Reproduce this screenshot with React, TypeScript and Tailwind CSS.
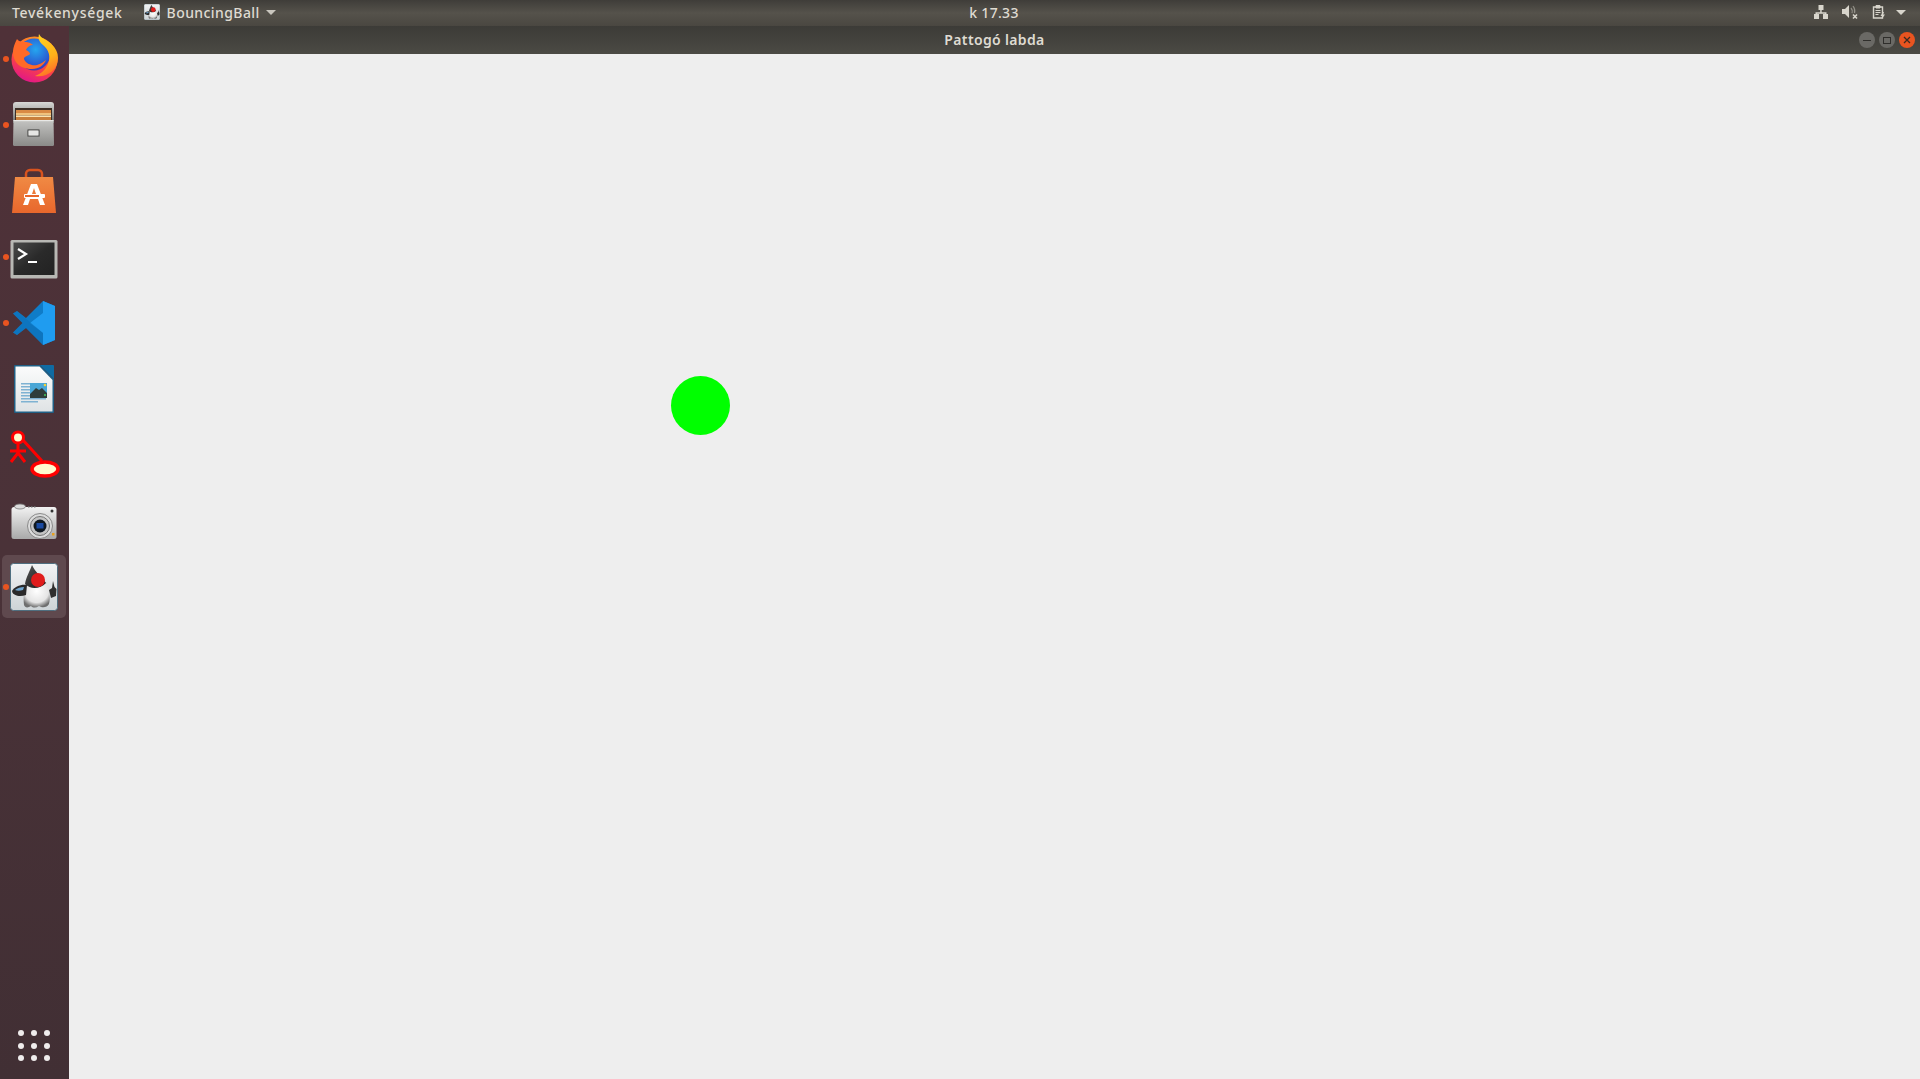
import React from 'react';

const FirefoxIcon = () => (
  <svg viewBox="0 0 48 48" className="w-12 h-12 overflow-visible">
    <defs>
      <linearGradient id="ffBody" x1="0.7" y1="0" x2="0.3" y2="1">
        <stop offset="0" stopColor="#ff9a1f" />
        <stop offset="0.55" stopColor="#ff4a3a" />
        <stop offset="1" stopColor="#e0148c" />
      </linearGradient>
      <linearGradient id="ffTail" x1="0.3" y1="0" x2="0.6" y2="1">
        <stop offset="0" stopColor="#ffd21f" />
        <stop offset="0.6" stopColor="#ffb01a" />
        <stop offset="1" stopColor="#ff6a2a" />
      </linearGradient>
      <radialGradient id="ffGlobe" cx="0.55" cy="0.35" r="0.7">
        <stop offset="0" stopColor="#25a6ef" />
        <stop offset="0.7" stopColor="#2a56d0" />
        <stop offset="1" stopColor="#4a2aa8" />
      </radialGradient>
    </defs>
    <circle cx="24.500" cy="24.500" r="23" fill="url(#ffBody)" />
    <circle cx="24" cy="19.500" r="16" fill="url(#ffGlobe)" />
    <path d="M7 4c2 3 6 3 9 3 2 0 5 1 7 3-3 0-6 2-7 5 2 1 4 2 4 4-2 2-6 2-6 5 2 5 8 7 13 6 4-1 6-3 9-5-2 5-7 9-14 9C8 34 3 25 3 17c0-5 2-9 4-13z" fill="#ff6a28" />
    <path d="M29-1c-1 4 0 8 4 11 6 5 8 12 5 19-2 5-7 10-13 12 12 2 23-6 23-18C48 12 38 6 34 4c-2-1-4-3-5-5z" fill="url(#ffTail)" />
  </svg>
);

const FilesIcon = () => (
  <svg viewBox="0 0 48 48" className="w-12 h-12">
    <defs>
      <linearGradient id="cabTop" x1="0" y1="0" x2="0" y2="1">
        <stop offset="0" stopColor="#d8d8d6" />
        <stop offset="1" stopColor="#6d6d6b" />
      </linearGradient>
      <linearGradient id="cabFront" x1="0" y1="0" x2="0" y2="1">
        <stop offset="0" stopColor="#c4c4c2" />
        <stop offset="1" stopColor="#8a8a88" />
      </linearGradient>
    </defs>
    <path d="M3 4a3 3 0 0 1 3-3h35a3 3 0 0 1 3 3v18H3z" fill="url(#cabTop)" />
    <rect x="5" y="7" width="37" height="13" fill="#3d2f26" />
    <rect x="6" y="9" width="35" height="3" fill="#d98a45" />
    <rect x="6" y="12" width="35" height="2.500" fill="#f0c27e" />
    <rect x="6" y="14.500" width="35" height="1.500" fill="#fbe2b0" />
    <rect x="6" y="16" width="35" height="3" fill="#c97f3c" />
    <path d="M3.500 19h40l.5 24.500a1.500 1.500 0 0 1-1.500 1.500h-38A1.500 1.500 0 0 1 3 43.500z" fill="url(#cabFront)" />
    <rect x="3.500" y="19" width="40" height="1.200" fill="#e8e8e6" />
    <rect x="17" y="28" width="13" height="8" rx="1.500" fill="#6f6f6d" />
    <rect x="18.500" y="29.500" width="10" height="5" rx="1" fill="#e6e6e4" />
  </svg>
);

const StoreIcon = () => (
  <svg viewBox="0 0 48 48" className="w-12 h-12">
    <defs>
      <linearGradient id="bag" x1="0" y1="0" x2="0" y2="1">
        <stop offset="0" stopColor="#f08a44" />
        <stop offset="1" stopColor="#e8672c" />
      </linearGradient>
    </defs>
    <path d="M16 12V7a4 4 0 0 1 4-4h8a4 4 0 0 1 4 4v5" fill="none" stroke="#d9531e" strokeWidth="2.500" />
    <path d="M5 10h38l3 36H2z" fill="url(#bag)" />
    <path d="M21 17h6l8 21h-5l-2-6h-8l-2 6h-5z M22 27h4l-2-6z" fill="#fff" fillRule="evenodd" />
    <rect x="14" y="27" width="21" height="4" rx="1" fill="#fff" />
    <rect x="15" y="28" width="14" height="2" fill="#e8672c" />
  </svg>
);

const TerminalIcon = () => (
  <svg viewBox="0 0 48 48" className="w-12 h-12">
    <defs>
      <linearGradient id="term" x1="0" y1="0" x2="1" y2="1">
        <stop offset="0" stopColor="#4a4a4a" />
        <stop offset="0.5" stopColor="#2a2a2a" />
        <stop offset="1" stopColor="#222" />
      </linearGradient>
    </defs>
    <g transform="translate(0 2)">
      <rect x="0.500" y="5" width="47" height="38.500" rx="1.500" fill="#b8b8b4" />
      <rect x="3.500" y="7.500" width="41" height="32.500" fill="url(#term)" />
      <path d="M8 14l8 5-8 5" fill="none" stroke="#fff" strokeWidth="2.200" />
      <rect x="18" y="26" width="9" height="2" fill="#fff" />
    </g>
  </svg>
);

const VSCodeIcon = () => (
  <svg viewBox="0 0 48 48" className="w-12 h-12">
    <path d="M33 2L16 19 7 12l-4 2.500 9.500 9.500L3 33.500 7 36l9-7 17 17 12-5V7z" fill="#0f7cc8" />
    <path d="M33 2l12 5v34l-12 5V34L20 24l13-10z" fill="#1f9cf0" />
    <path d="M3 14.500L7 12l26 22v12L16 29 7 36l-4-2.500L12.500 24z" fill="#0a6cb4" opacity="0.45" />
  </svg>
);

const WriterIcon = () => (
  <svg viewBox="0 0 48 48" className="w-12 h-12">
    <defs>
      <linearGradient id="sheet" x1="0" y1="0" x2="0" y2="1">
        <stop offset="0" stopColor="#fbfcfc" />
        <stop offset="1" stopColor="#dfe3e5" />
      </linearGradient>
    </defs>
    <path d="M5 0h25l14 14v33a1 1 0 0 1-1 1H5a1 1 0 0 1-1-1V1a1 1 0 0 1 1-1z" fill="#1f5f85" />
    <path d="M5.500 1.500h24L42.500 15v31.500h-37z" fill="url(#sheet)" />
    <path d="M30 0l14 14V1a1 1 0 0 0-1-1z" fill="#0f6ba3" />
    <g fill="#7fb2d2">
      <rect x="11" y="18" width="17" height="1.500" />
      <rect x="11" y="21" width="17" height="1.500" />
      <rect x="11" y="24" width="17" height="1.500" />
      <rect x="11" y="27" width="17" height="1.500" />
      <rect x="11" y="30" width="17" height="1.500" />
      <rect x="11" y="33" width="25" height="1.500" />
      <rect x="11" y="36" width="17" height="1.500" />
    </g>
    <rect x="20" y="18" width="17" height="15" fill="#4aa7d6" />
    <path d="M20 29l6-6 3 2 3-2 5 5v5H20z" fill="#2f3d3a" />
    <circle cx="35" cy="20" r="1.300" fill="#f2d13c" />
    <rect x="34" y="29" width="2" height="2" fill="#3aa655" />
  </svg>
);

const UmbrelloIcon = () => (
  <svg viewBox="0 0 48 48" className="w-12 h-12 overflow-visible">
    <g fill="none" stroke="#ff0000" strokeWidth="3">
      <path d="M8 12v10M0 20h16M8 22L1 31M8 22l7 9" />
      <path d="M12 8l20 22" />
      <circle cx="8" cy="6.500" r="5.500" fill="#fffacd" />
      <ellipse cx="35" cy="38" rx="13" ry="7" fill="#fffacd" strokeWidth="3.500" />
    </g>
  </svg>
);

const CameraIcon = () => (
  <svg viewBox="0 0 48 48" className="w-12 h-12">
    <defs>
      <linearGradient id="cam" x1="0" y1="0" x2="0" y2="1">
        <stop offset="0" stopColor="#f2f2f2" />
        <stop offset="1" stopColor="#a9a9a9" />
      </linearGradient>
    </defs>
    <rect x="1.500" y="10" width="45" height="32" rx="2.500" fill="url(#cam)" />
    <ellipse cx="10" cy="9.500" rx="5.500" ry="2.500" fill="#dcdcdc" stroke="#777" strokeWidth="0.800" />
    <g fill="#666">
      <rect x="18" y="9" width="1.500" height="1.500" />
      <rect x="21" y="9" width="1.500" height="1.500" />
      <rect x="24" y="9" width="1.500" height="1.500" />
    </g>
    <circle cx="30" cy="29" r="12.500" fill="#dcdcdc" stroke="#8a8a8a" />
    <circle cx="30" cy="29" r="9.500" fill="#c4c4c4" stroke="#777" />
    <circle cx="30" cy="29" r="6.500" fill="#101820" />
    <rect x="26.500" y="26" width="7" height="5.500" fill="#1b4aa0" />
    <circle cx="42" cy="14" r="1.500" fill="#333" />
    <rect x="42" y="36" width="2.500" height="2.500" fill="#e8a020" />
  </svg>
);

const JavaIcon = () => (
  <svg viewBox="0 0 48 48" className="w-12 h-12">
    <defs>
      <linearGradient id="jbg" x1="0" y1="0" x2="0" y2="1">
        <stop offset="0" stopColor="#f2f3f4" />
        <stop offset="1" stopColor="#cdd3d6" />
      </linearGradient>
      <radialGradient id="jbody" cx="0.5" cy="0.35" r="0.65">
        <stop offset="0" stopColor="#fff" />
        <stop offset="0.7" stopColor="#e4e4e4" />
        <stop offset="1" stopColor="#6e6e6e" />
      </radialGradient>
      <linearGradient id="jhat" x1="0" y1="0" x2="1" y2="1">
        <stop offset="0" stopColor="#555" />
        <stop offset="1" stopColor="#161616" />
      </linearGradient>
    </defs>
    <rect x="0.500" y="0.500" width="47" height="47" rx="3" fill="url(#jbg)" stroke="#4f6f80" />
    <path d="M14 42c-1-8 0-17 3-22 6 5 14 4 19-1 3 7 5 15 3 22-2 4-7 4-10 2-3 2-6 2-8 0-3 2-6 2-7-1z" fill="url(#jbody)" />
    <path d="M22 2c3 7 10 12 14 18-6 6-15 7-21 1 1-7 5-13 7-19z" fill="url(#jhat)" />
    <circle cx="28" cy="17" r="7" fill="#e01c1c" />
    <path d="M2 28c2-4 9-7 15-6l-1 10c-6 2-13 1-14-4z" fill="#2a2a2a" />
    <path d="M5 27c2-2 6-3 9-3l-1 3c-3 1-6 1-8 0z" fill="#6ea5cf" />
    <path d="M43 18l1.500 6 2 2-.5 7-5 2-2-8 3-2z" fill="#2f2f2f" />
  </svg>
);

const dockItems = [
  { icon: <FirefoxIcon />, running: true, active: false },
  { icon: <FilesIcon />, running: true, active: false },
  { icon: <StoreIcon />, running: false, active: false },
  { icon: <TerminalIcon />, running: true, active: false },
  { icon: <VSCodeIcon />, running: true, active: false },
  { icon: <WriterIcon />, running: false, active: false },
  { icon: <UmbrelloIcon />, running: false, active: false },
  { icon: <CameraIcon />, running: false, active: false },
  { icon: <JavaIcon />, running: true, active: true },
];

const font = 'font-["Noto_Sans",sans-serif]';

export default function App() {
  return (
    <div className={`h-[1079px] w-[1920px] flex flex-col overflow-hidden ${font}`}>
      {/* Top panel */}
      <div className="h-[26px] flex items-center shrink-0 pb-[2px] bg-gradient-to-b from-[#3f3d39] via-[#55524b] to-[#4a4741] text-[14px] font-medium text-[#dfdbd2]">
        <div className="w-[934px] flex items-center pl-3">
          <span className="tracking-[0.7px]">Tevékenységek</span>
          <span className="ml-[21px] w-4 h-4 rounded-[2px] bg-[#e8eaeb] overflow-hidden shrink-0 [&>svg]:w-4 [&>svg]:h-4">
            <JavaIcon />
          </span>
          <span className="ml-[7px] tracking-[0.42px]">BouncingBall</span>
          <span className="ml-[6px] border-x-[5px] border-x-transparent border-t-[5px] border-t-[#c9c6be]" />
        </div>
        <div className="w-[120px] text-center tracking-[0.3px]">k 17.33</div>
        <div className="flex-1 flex items-center text-[#d8d5cc]">
          <div className="ml-auto flex items-center pr-[14px]">
            <svg viewBox="0 0 16 16" className="w-4 h-4" fill="currentColor">
              <path d="M5.500 1h5v5H8.700v2.200H13.500V10H15v5h-5v-5h1.800V9.800H4.200V10H6v5H1v-5h1.500V8.200h4.700V6H5.500z" />
            </svg>
            <svg viewBox="0 0 18 16" className="w-[18px] h-4 ml-[12px]" fill="currentColor">
              <path d="M1 5h3l4-4v13l-4-4H1z" />
              <path d="M10 4a5 5 0 0 1 1 5M12 2a8 8 0 0 1 1.500 7" fill="none" stroke="currentColor" strokeOpacity="0.5" strokeWidth="1.200" />
              <path d="M12 10.500l4 4m0-4l-4 4" stroke="currentColor" strokeWidth="1.600" />
            </svg>
            <svg viewBox="0 0 16 16" className="w-4 h-4 ml-[12px]" fill="none" stroke="currentColor">
              <path d="M2.500 3h9v11h-9z" strokeWidth="1.400" />
              <path d="M5 1.500h4v2.500H5z" fill="currentColor" />
              <path d="M4.500 6.500h5M4.500 8.500h5M4.500 10.500h3" strokeWidth="1" />
              <path d="M12 8l-2.500 4h2L10.500 15.500l3.500-5h-2l1-2.500z" fill="currentColor" stroke="none" />
            </svg>
            <span className="ml-[9px] border-x-[5px] border-x-transparent border-t-[5px] border-t-[#d8d5cc]" />
          </div>
        </div>
      </div>

      <div className="flex-1 flex min-h-0">
        {/* Dock */}
        <div className="w-[69px] shrink-0 flex flex-col bg-gradient-to-b from-[#4f3138] via-[#4a3238] to-[#412f34]">
          {dockItems.map((item, i) => (
            <div key={i} className="relative h-[66px] flex items-center justify-center">
              {item.active && <div className="absolute left-[2px] top-[1px] w-[64px] h-[63px] rounded-[5px] bg-[#5f494e]" />}
              <div className="relative w-12 h-12 ml-[-2px]">{item.icon}</div>
              {item.running && <span className="absolute left-[3px] top-[30px] w-[6px] h-[6px] rounded-full bg-[#e95420]" />}
            </div>
          ))}
          <div className="mt-auto mb-[18px] ml-[18px] grid grid-cols-3 w-[32px] gap-x-[6.500px] gap-y-[6.500px]">
            {Array.from({ length: 9 }).map((_, i) => (
              <span key={i} className="w-[6px] h-[6px] rounded-full bg-[#efecec]" />
            ))}
          </div>
        </div>

        {/* Window */}
        <div className="flex-1 flex flex-col min-w-0">
          <div className="relative h-[28px] shrink-0 flex items-center justify-center pb-[2px] bg-gradient-to-b from-[#3c3b37] to-[#4b4a44] text-[14px] font-semibold text-[#dfdbd2]">
            <span className="tracking-[0.35px]">Pattogó labda</span>
            <div className="absolute right-[5px] top-[6px] flex gap-1">
              <span className="w-4 h-4 rounded-full bg-[#6a6965] flex items-center justify-center">
                <span className="w-2 h-px bg-[#2f2e2b]" />
              </span>
              <span className="w-4 h-4 rounded-full bg-[#6a6965] flex items-center justify-center">
                <span className="w-2 h-[7px] border border-[#2f2e2b]" />
              </span>
              <span className="w-4 h-4 rounded-full bg-[#e95420] flex items-center justify-center text-[#3c2a20]">
                <svg viewBox="0 0 8 8" className="w-2 h-2" stroke="currentColor" strokeWidth="1.300">
                  <path d="M1 1l6 6M7 1L1 7" />
                </svg>
              </span>
            </div>
          </div>
          <div className="relative flex-1 bg-[#eeeeee]">
            <div className="absolute left-[602px] top-[322px] w-[59px] h-[59px] rounded-full bg-[#00ff00]" />
          </div>
        </div>
      </div>
    </div>
  );
}
